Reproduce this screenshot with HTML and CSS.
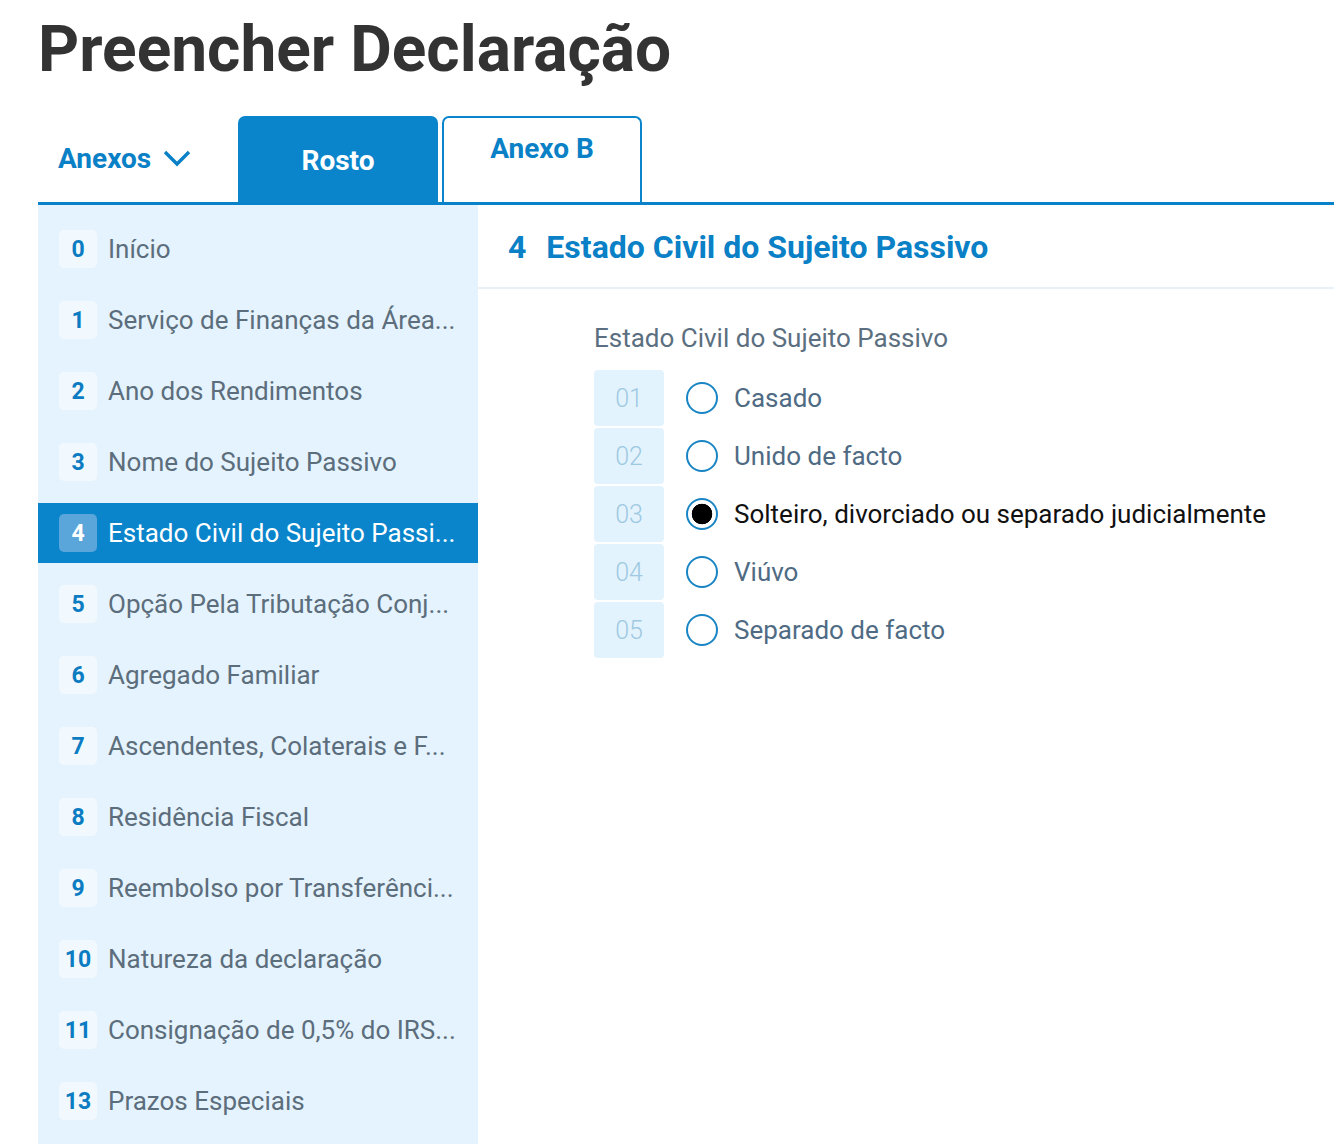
FILE: index.html
```html
<!DOCTYPE html>
<html lang="pt">
<head>
<meta charset="utf-8">
<title>Preencher Declaração</title>
<link rel="stylesheet" href="styles.css">
</head>
<body>
<div class="page">
  <h1 class="title">Preencher Declaração</h1>
  <div class="tabs">
    <div class="tab-menu">Anexos
      <svg class="chev" width="28" height="18" viewBox="0 0 28 18"><path d="M2 3 L14 15 L26 3" fill="none" stroke="#0a80c6" stroke-width="3.4"/></svg>
    </div>
    <div class="tab tab-active">Rosto</div>
    <div class="tab tab-outline">Anexo B</div>
  </div>
  <div class="main">
    <nav class="side">
      <div class="item"><span class="num">0</span><span class="lbl">Início</span></div>
      <div class="item"><span class="num">1</span><span class="lbl">Serviço de Finanças da Área...</span></div>
      <div class="item"><span class="num">2</span><span class="lbl">Ano dos Rendimentos</span></div>
      <div class="item"><span class="num">3</span><span class="lbl">Nome do Sujeito Passivo</span></div>
      <div class="item item-active"><span class="num">4</span><span class="lbl">Estado Civil do Sujeito Passi...</span></div>
      <div class="item"><span class="num">5</span><span class="lbl">Opção Pela Tributação Conj...</span></div>
      <div class="item"><span class="num">6</span><span class="lbl">Agregado Familiar</span></div>
      <div class="item"><span class="num">7</span><span class="lbl">Ascendentes, Colaterais e F...</span></div>
      <div class="item"><span class="num">8</span><span class="lbl">Residência Fiscal</span></div>
      <div class="item"><span class="num">9</span><span class="lbl">Reembolso por Transferênci...</span></div>
      <div class="item"><span class="num">10</span><span class="lbl">Natureza da declaração</span></div>
      <div class="item"><span class="num">11</span><span class="lbl">Consignação de 0,5% do IRS...</span></div>
      <div class="item"><span class="num">13</span><span class="lbl">Prazos Especiais</span></div>
    </nav>
    <section class="content">
      <div class="sec-head"><span class="sec-num">4</span><span>Estado Civil do Sujeito Passivo</span></div>
      <div class="form">
        <div class="field-label">Estado Civil do Sujeito Passivo</div>
        <div class="opt"><span class="code">01</span><span class="radio"></span><span class="opt-lbl">Casado</span></div>
        <div class="opt"><span class="code">02</span><span class="radio"></span><span class="opt-lbl">Unido de facto</span></div>
        <div class="opt opt-sel"><span class="code">03</span><span class="radio"></span><span class="opt-lbl">Solteiro, divorciado ou separado judicialmente</span></div>
        <div class="opt"><span class="code">04</span><span class="radio"></span><span class="opt-lbl">Viúvo</span></div>
        <div class="opt"><span class="code">05</span><span class="radio"></span><span class="opt-lbl">Separado de facto</span></div>
      </div>
    </section>
  </div>
</div>
</body>
</html>
```

FILE: styles.css
```css
html, body {
  margin: 0;
  padding: 0;
  background: #ffffff;
  font-family: Roboto, "Liberation Sans", sans-serif;
  overflow: hidden;
}
.page {
  width: 1334px;
  height: 1144px;
  padding-left: 38px;
  box-sizing: border-box;
}
.title {
  margin: 0;
  padding: 12px 0 0 0;
  height: 104px;
  box-sizing: border-box;
  font-size: 64px;
  font-weight: 700;
  color: #333333;
  letter-spacing: 0;
  line-height: 76px;
}
.tabs {
  display: flex;
  align-items: flex-end;
  height: 86px;
  margin-top: 12px;
  border-bottom: 3px solid #0a82c9;
}
.tab-menu {
  width: 200px;
  height: 86px;
  box-sizing: border-box;
  padding: 26px 0 0 20px;
  font-size: 28px;
  font-weight: 700;
  color: #0a80c6;
  display: flex;
  align-items: flex-start;
  gap: 12px;
}
.chev {
  margin-top: 7px;
}
.tab {
  width: 200px;
  height: 86px;
  box-sizing: border-box;
  border-radius: 7px 7px 0 0;
  font-size: 28px;
  font-weight: 700;
  text-align: center;
}
.tab-active {
  background: #0a85cc;
  color: #ffffff;
  padding-top: 28px;
}
.tab-outline {
  margin-left: 4px;
  border: 2px solid #0a85cc;
  border-bottom: none;
  color: #0a80c6;
  padding-top: 14px;
}
.main {
  display: flex;
  height: 939px;
}
.side {
  width: 440px;
  background: #e4f3fd;
  padding-top: 14px;
  box-sizing: border-box;
  display: flex;
  flex-direction: column;
  gap: 11px;
}
.item {
  height: 60px;
  display: flex;
  align-items: center;
  padding-left: 21px;
}
.num {
  width: 38px;
  height: 38px;
  border-radius: 5px;
  background: #f1f9fe;
  color: #0b7cc2;
  font-weight: 700;
  font-size: 23px;
  display: flex;
  align-items: center;
  justify-content: center;
  flex: none;
}
.lbl {
  margin-left: 11px;
  font-size: 26px;
  color: #5c6d7c;
  white-space: nowrap;
}
.item-active {
  background: #0a85cc;
}
.item-active .num {
  background: #5aa5da;
  color: #ffffff;
}
.item-active .lbl {
  color: #ffffff;
}
.content {
  flex: 1;
}
.sec-head {
  height: 84px;
  box-sizing: border-box;
  border-bottom: 2px solid #e8f1f7;
  padding: 2px 0 0 30px;
  display: flex;
  align-items: center;
  font-size: 32px;
  font-weight: 700;
  color: #0a80c6;
}
.sec-num {
  margin-right: 20px;
}
.form {
  padding: 34px 0 0 116px;
  display: flex;
  flex-direction: column;
  gap: 2px;
}
.field-label {
  font-size: 26px;
  color: #5b6f80;
  height: 45px;
}
.opt {
  display: flex;
  align-items: center;
  height: 56px;
}
.code {
  width: 70px;
  height: 56px;
  border-radius: 4px;
  background: #e3f3fd;
  color: #9ec9e2;
  font-size: 25px;
  font-weight: 300;
  display: flex;
  align-items: center;
  justify-content: center;
  flex: none;
}
.radio {
  width: 32px;
  height: 32px;
  box-sizing: border-box;
  border: 2px solid #1a85c4;
  border-radius: 50%;
  margin-left: 22px;
  background: #ffffff;
  flex: none;
}
.opt-sel .radio {
  background: radial-gradient(circle, #000000 0, #000000 10px, #ffffff 10.6px);
}
.opt-lbl {
  margin-left: 16px;
  font-size: 26px;
  color: #4f6b84;
  white-space: nowrap;
}
.opt-sel .opt-lbl {
  color: #111111;
}
```
